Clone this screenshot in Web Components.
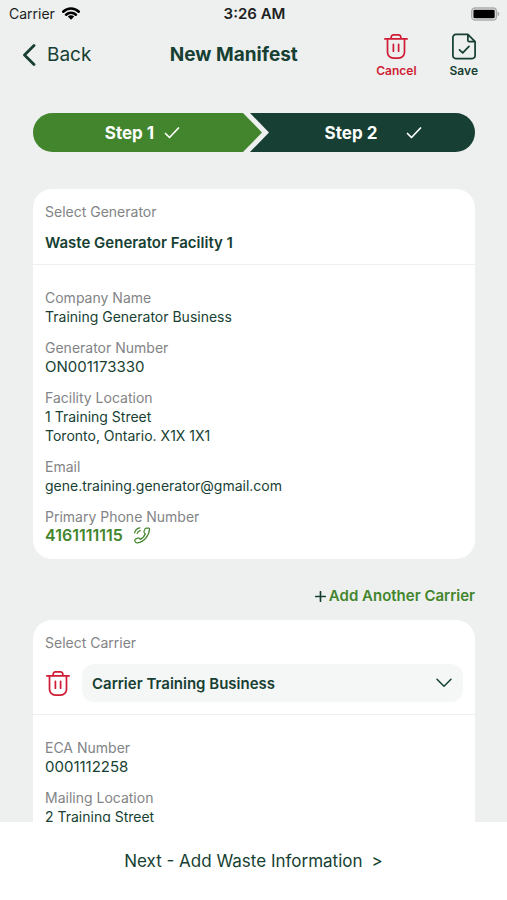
<!DOCTYPE html>
<html lang="en">
<head>
<meta charset="utf-8">
<meta name="viewport" content="width=device-width, initial-scale=1">
<title>New Manifest</title>
<style>
:root{--ink:#173f33;--green:#43852d;--red:#d01d35;--grey:#828486;--bg:#edf0ef}
body{margin:0;background:var(--bg);color:var(--ink);font:14px/19px Inter,"Liberation Sans",sans-serif}
</style>
</head>
<body>
<manifest-page></manifest-page>
<script>
const define = (name, html, setup) => {
  const template = document.createElement('template');
  template.innerHTML = html;
  customElements.define(name, class extends HTMLElement {
    constructor() {
      super();
      this.attachShadow({ mode: 'open' }).append(template.content.cloneNode(true));
    }
    connectedCallback() { if (setup) setup(this, this.shadowRoot); }
  });
};

const icons = {
  trash: ['0 0 26 28', '<path d="M1.5 6.2h23M8 6V4.2A2.2 2.2 0 0 1 10.200 2h5.600A2.200 2.200 0 0 1 18 4.200V6M4.200 6.400V20a6 6 0 0 0 6 6h5.600a6 6 0 0 0 6-6V6.400M10.300 11.800v7M15.700 11.800v7"/>'],
  save: ['0 0 26 28', '<path d="M17 1.500H4.500a3 3 0 0 0-3 3v19a3 3 0 0 0 3 3h17a3 3 0 0 0 3-3V9zM17 1.500V7.500A1.500 1.500 0 0 0 18.500 9h6M8.300 17.500l3.400 3.200 6.500-6.800"/>'],
  back: ['0 0 14 22', '<path d="M12 1.500L2.500 11 12 20.500"/>'],
  check: ['0 0 16 12', '<path d="M1.500 6.500l4 4L14.500 1"/>'],
  phone: ['0 0 18 18', '<path d="M11.800 2.800c.3-1 1-1.500 2-1.600l2-.1c.8 0 1.200.5 1.100 1.300-.4 7-5.900 13.500-12.700 14.400-.9.1-1.700-.2-2.100-.9l-.7-1.200c-.4-.8 0-1.500.7-1.900l2.500-1.200c.8-.3 1.500 0 1.900.6l.5.9c2.700-1.200 4.600-3.300 5.500-5.900l-.8-.7c-.6-.5-.8-1.200-.5-1.900zM1.200 6.300c.6-2.800 2.700-4.900 5.600-5.300M4 6.800c.4-1.600 1.600-2.700 3.200-3"/>'],
  wifi: ['0 0 18 13', '<path d="M1.200 4.700c4.400-4.200 11.200-4.200 15.600 0M4.100 7.700c2.800-2.700 7-2.700 9.800 0"/><path d="M9 12.700L5.800 9.600c1.800-1.700 4.600-1.700 6.400 0z" fill="currentColor" stroke="none"/>'],
  battery: ['0 0 30 14', '<rect x=".75" y=".75" width="25.500" height="12.500" rx="3.500" fill="none" stroke="#a9acab" stroke-width="1.500"/><rect x="2.500" y="2.500" width="22" height="9" rx="1.500" fill="#000" stroke="none"/><path d="M27.500 4.800c2.500.7 2.500 3.700 0 4.400z" fill="#a9acab" stroke="none"/>'],
  down: ['0 0 16 10', '<path d="M1 1.300l7 7 7-7"/>'],
  plus: ['0 0 12 12', '<path d="M6 .8v10.400M.8 6h10.400"/>']
};
define('app-icon', `<style>:host{display:inline-flex;flex:none;width:var(--w,16px);height:var(--h,16px)}
svg{width:100%;height:100%;fill:none;stroke:currentColor;stroke-width:var(--s,2);stroke-linecap:round;stroke-linejoin:round}</style><svg aria-hidden="true"></svg>`,
(el, root) => {
  const [box, body] = icons[el.getAttribute('name')];
  const svg = root.querySelector('svg');
  svg.setAttribute('viewBox', box);
  svg.innerHTML = body;
});

define('status-bar', `<style>:host{display:grid;grid-template-columns:1fr auto 1fr;align-items:center;height:27px;padding:0 7px 0 9px;color:#1c1e1e;font-size:14px}
.net{display:flex;align-items:center;gap:7px}.net app-icon{--w:18px;--h:13px;--s:2.6;color:#000}
.time{font-weight:600;font-size:15px}.bat{justify-self:end;--w:29px;--h:14px}</style>
<div class="net"><span>Carrier</span><app-icon name="wifi"></app-icon></div><span class="time">3:26 AM</span><app-icon class="bat" name="battery"></app-icon>`);

define('nav-bar', `<style>:host{display:flex;justify-content:space-between;align-items:center;height:56px;padding:0 29px 0 22px}
a{display:flex;align-items:center;gap:11px;color:inherit;text-decoration:none;font-size:19px;line-height:24px}
a app-icon{--w:14px;--h:22px;--s:2.8}
h1{margin:0;font-size:19px;line-height:24px;font-weight:700}
.actions{display:flex;gap:33px}
button{display:flex;flex-direction:column;align-items:center;gap:3px;padding:0;border:0;background:none;color:inherit;font:600 12px/15px Inter,"Liberation Sans",sans-serif;--w:26px;--h:27px;--s:1.8}
.cancel{color:var(--red)}</style>
<a href="#back"><app-icon name="back"></app-icon>Back</a><h1>New Manifest</h1>
<div class="actions"><button class="cancel" type="button"><app-icon name="trash"></app-icon>Cancel</button><button type="button"><app-icon name="save"></app-icon>Save</button></div>`);

define('step-bar', `<style>:host{display:grid;grid-template-columns:1fr 1fr;height:39px;border-radius:20px;overflow:hidden;color:#fff;font-weight:700;font-size:17px;line-height:22px}
div{display:flex;align-items:center;justify-content:center}
app-icon{--w:16px;--h:12px;--s:1.7}
.one{gap:10px;background:var(--green);margin-right:-8px;clip-path:polygon(0 0,calc(100% - 19px) 0,100% 50%,calc(100% - 19px) 100%,0 100%);padding-right:10px}
.two{gap:29px;background:var(--ink);margin-left:-4px;clip-path:polygon(0 0,100% 0,100% 100%,0 100%,19px 50%);padding-left:22px}</style>
<div class="one"><span>Step 1</span><app-icon name="check"></app-icon></div><div class="two"><span>Step 2</span><app-icon name="check"></app-icon></div>`);

define('info-card', `<style>:host{display:block;background:#fff;border-radius:19px}
header{display:flex;flex-direction:column;gap:12px;padding:13px 12px 12px;border-bottom:1px solid #eef0ef}
.body{display:flex;flex-direction:column;gap:12px;padding:23px 12px 14px}</style>
<header><slot name="head"></slot></header><div class="body"><slot></slot></div>`);

define('info-field', `<style>:host{display:block}dl,dd{margin:0}dt{color:var(--grey)}:host([numeric]) dd{font-size:15px}</style><dl><dt></dt><dd><slot></slot></dd></dl>`,
(el, root) => { root.querySelector('dt').textContent = el.getAttribute('label'); });

define('carrier-select', `<style>:host{display:flex;flex-direction:column;gap:12px}
label{color:var(--grey)}.row{display:flex;align-items:center;gap:11px}
button{display:flex;padding:0;border:0;background:none;color:var(--red);--w:26px;--h:27px;--s:1.8}
.box{flex:1;display:grid;align-items:center;color:var(--ink)}
.box>*{grid-area:1/1}
select{appearance:none;width:100%;height:38px;margin:0;padding:0 44px 0 10px;border:0;border-radius:12px;background:#f5f6f6;color:inherit;font:600 15px/19px Inter,"Liberation Sans",sans-serif}
app-icon.down{justify-self:end;margin-right:11px;pointer-events:none;--w:16px;--h:10px;--s:1.5}</style>
<label for="carrier">Select Carrier</label>
<div class="row"><button type="button" aria-label="Remove carrier"><app-icon name="trash"></app-icon></button>
<div class="box"><select id="carrier"><option>Carrier Training Business</option></select><app-icon class="down" name="down"></app-icon></div></div>`);

define('next-bar', `<style>:host{display:flex;justify-content:center;padding:27px 16px;background:#fff}
a{color:inherit;text-decoration:none;font-size:17px;line-height:24px;display:flex;gap:9px}</style>
<a href="#waste"><span>Next - Add Waste Information</span><span>&gt;</span></a>`);

define('manifest-page', `<style>:host{display:flex;flex-direction:column;height:100vh;overflow:hidden}
main{flex:1;min-height:0;overflow-y:auto;scrollbar-width:none;padding:30px 32px 0 33px}
info-card.first{margin-top:37px}
strong{font-weight:600;font-size:15px}.label{color:var(--grey)}
.phone{display:flex;width:max-content;align-items:center;gap:10px;color:var(--green);font-weight:600;font-size:16px;text-decoration:none;--w:18px;--h:17px;--s:1.3}
.add{display:flex;width:max-content;align-items:center;gap:3px;margin:27px 0 14px auto;padding:0;border:0;background:none;color:var(--green);font:600 15px/20px Inter,"Liberation Sans",sans-serif}
.add app-icon{--w:11px;--h:11px;--s:1.8;color:var(--ink)}</style>
<status-bar></status-bar><nav-bar></nav-bar>
<main>
<step-bar></step-bar>
<info-card class="first">
<span slot="head" class="label">Select Generator</span><strong slot="head">Waste Generator Facility 1</strong>
<info-field label="Company Name">Training Generator Business</info-field>
<info-field label="Generator Number" numeric>ON001173330</info-field>
<info-field label="Facility Location">1 Training Street<br>Toronto, Ontario. X1X 1X1</info-field>
<info-field label="Email">gene.training.generator@gmail.com</info-field>
<info-field label="Primary Phone Number" numeric><a class="phone" href="tel:4161111115">4161111115<app-icon name="phone"></app-icon></a></info-field>
</info-card>
<button class="add" type="button"><app-icon name="plus"></app-icon>Add Another Carrier</button>
<info-card>
<carrier-select slot="head"></carrier-select>
<info-field label="ECA Number" numeric>0001112258</info-field>
<info-field label="Mailing Location">2 Training Street</info-field>
</info-card>
</main>
<next-bar></next-bar>`);
</script>
</body>
</html>
